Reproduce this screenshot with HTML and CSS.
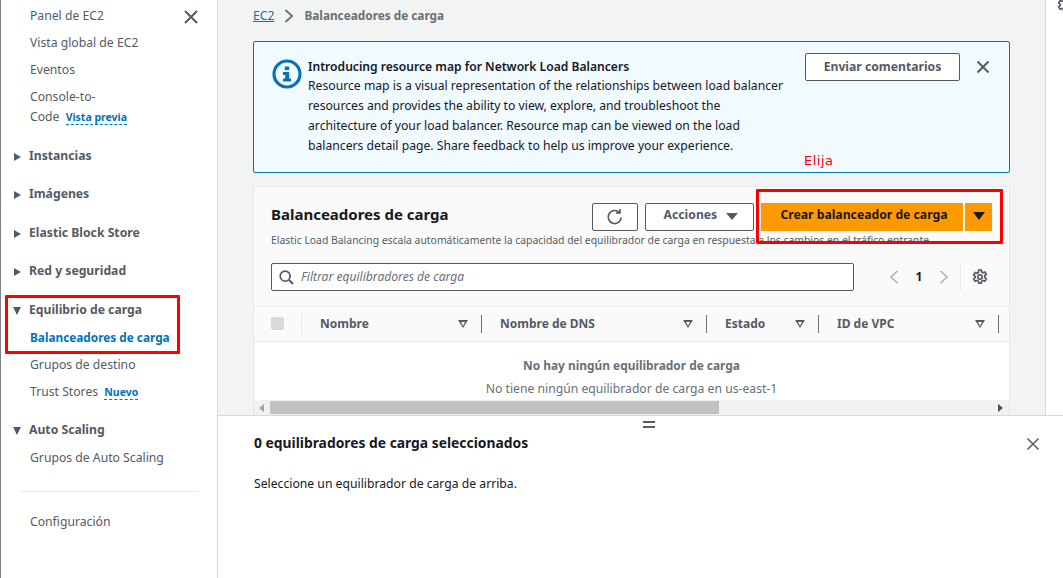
FILE: index.html
```html
<!DOCTYPE html>
<html lang="es">
<head>
    <meta charset="UTF-8">
    <meta name="viewport" content="width=device-width, initial-scale=1.0">
    <title>Balanceadores de carga - EC2</title>
    <link rel="stylesheet" href="styles.css">
</head>
<body>
    <div class="app">
        <nav class="nav">
            <button class="nav-close" aria-label="Cerrar">
                <svg width="14" height="14" viewBox="0 0 14 14"><path d="M1 1l12 12M13 1L1 13" class="stroke-2"/></svg>
            </button>
            <ul class="nav-list">
                <li class="nav-item">Panel de EC2</li>
                <li class="nav-item">Vista global de EC2</li>
                <li class="nav-item">Eventos</li>
                <li class="nav-item nav-wrap">Console-to-<br>Code <span class="tag tag-preview">Vista previa</span></li>
            </ul>
            <div class="nav-head nav-head-first"><span class="caret-right"></span>Instancias</div>
            <div class="nav-head"><span class="caret-right"></span>Imágenes</div>
            <div class="nav-head"><span class="caret-right"></span>Elastic Block Store</div>
            <div class="nav-head"><span class="caret-right"></span>Red y seguridad</div>
            <div class="nav-head"><span class="caret-down"></span>Equilibrio de carga</div>
            <ul class="nav-list">
                <li class="nav-item nav-active">Balanceadores de carga</li>
                <li class="nav-item">Grupos de destino</li>
                <li class="nav-item">Trust Stores <span class="tag tag-new">Nuevo</span></li>
            </ul>
            <div class="nav-head"><span class="caret-down"></span>Auto Scaling</div>
            <ul class="nav-list">
                <li class="nav-item">Grupos de Auto Scaling</li>
            </ul>
            <hr class="nav-divider">
            <div class="nav-item">Configuración</div>
        </nav>

        <div class="workspace">
            <div class="upper">
                <main class="content">
                    <div class="breadcrumb">
                        <a class="crumb-link" href="#">EC2</a>
                        <svg width="10" height="14" viewBox="0 0 10 14"><path d="M1.500 1L8 7l-6.500 6" class="stroke-crumb"/></svg>
                        <span class="crumb-current">Balanceadores de carga</span>
                    </div>

                    <section class="flash">
                        <svg class="flash-icon" width="30" height="30" viewBox="0 0 30 30">
                            <circle cx="15" cy="15" r="13" fill="none" stroke="#0972b3" stroke-width="3.200"/>
                            <rect x="12.800" y="7.500" width="4.400" height="3.600" fill="#0972b3"/>
                            <path d="M11 13h6.200v6.500h1.800V22.500h-8v-3h2.200V16H11z" fill="#0972b3"/>
                        </svg>
                        <div class="flash-body">
                            <strong class="flash-title">Introducing resource map for Network Load Balancers</strong>
                            <p class="flash-text">Resource map is a visual representation of the relationships between load balancer resources and provides the ability to view, explore, and troubleshoot the architecture of your load balancer. Resource map can be viewed on the load balancers detail page. Share feedback to help us improve your experience.</p>
                        </div>
                        <button class="btn btn-feedback">Enviar comentarios</button>
                        <svg class="flash-close" width="14" height="14" viewBox="0 0 14 14"><path d="M1.500 1.500l11 11M12.500 1.500l-11 11" class="stroke-2"/></svg>
                    </section>

                    <section class="panel">
                        <div class="panel-head">
                            <div class="panel-top">
                                <h1 class="panel-title">Balanceadores de carga</h1>
                                <button class="btn btn-refresh" aria-label="Actualizar">
                                    <svg width="18" height="18" viewBox="0 0 18 18"><path d="M15.200 9.500a6.500 6.500 0 1 1-2-5.200M14 1v4h-4" class="stroke-icon"/></svg>
                                </button>
                                <button class="btn btn-actions">Acciones <span class="tri"></span></button>
                                <div class="split-btn">
                                    <button class="btn-primary">Crear balanceador de carga</button>
                                    <button class="btn-primary btn-primary-tri" aria-label="Más"><span class="tri tri-dark"></span></button>
                                </div>
                            </div>
                            <p class="panel-desc">Elastic Load Balancing escala automáticamente la capacidad del equilibrador de carga en respuesta a los cambios en el tráfico entrante.</p>
                            <div class="filter-row">
                                <div class="filter">
                                    <svg width="15" height="15" viewBox="0 0 15 15"><circle cx="6.200" cy="6.200" r="5" class="stroke-icon"/><path d="M10 10l4 4" class="stroke-2"/></svg>
                                    <span class="filter-text">Filtrar equilibradores de carga</span>
                                </div>
                                <div class="pager">
                                    <svg width="10" height="14" viewBox="0 0 10 14"><path d="M8.500 1L2 7l6.500 6" class="stroke-muted"/></svg>
                                    <b class="page-num">1</b>
                                    <svg width="10" height="14" viewBox="0 0 10 14"><path d="M1.500 1L8 7l-6.500 6" class="stroke-muted"/></svg>
                                </div>
                                <div class="prefs">
                                    <svg width="16" height="16" viewBox="0 0 16 16"><path d="M6.700 1h2.600l.4 2 1.300.7 1.900-.7 1.400 2.300-1.500 1.400v1.800l1.500 1.400-1.400 2.300-1.900-.7-1.300.7-.4 2H6.700l-.4-2-1.300-.7-1.900.7-1.400-2.300 1.500-1.400V7.300L1.700 5.900l1.400-2.300 1.900.7 1.300-.7z" class="stroke-icon"/><circle cx="8" cy="8" r="2.200" class="stroke-icon"/></svg>
                                </div>
                            </div>
                        </div>
                        <div class="table-head">
                            <div class="th-check"><span class="checkbox"></span></div>
                            <div class="th th-name">Nombre <span class="sort"></span></div>
                            <div class="th th-dns">Nombre de DNS <span class="sort"></span></div>
                            <div class="th th-state">Estado <span class="sort"></span></div>
                            <div class="th th-vpc">ID de VPC <span class="sort"></span></div>
                        </div>
                        <div class="table-empty">
                            <b class="empty-title">No hay ningún equilibrador de carga</b>
                            <span class="empty-text">No tiene ningún equilibrador de carga en us-east-1</span>
                        </div>
                        <div class="scrollbar">
                            <div class="scroll-end"><span class="scroll-left"></span></div>
                            <div class="scroll-track"><div class="scroll-thumb"></div></div>
                            <span class="scroll-right"></span>
                        </div>
                    </section>
                </main>
                <aside class="rail">
                    <svg class="rail-icon" width="16" height="16" viewBox="0 0 16 16"><path d="M6.700 1h2.600l.4 2 1.300.7 1.900-.7 1.400 2.300-1.500 1.400v1.800l1.500 1.400-1.400 2.300-1.900-.7-1.300.7-.4 2H6.700l-.4-2-1.300-.7-1.900.7-1.400-2.300 1.500-1.400V7.300L1.700 5.900l1.400-2.300 1.900.7 1.300-.7z" class="stroke-icon"/></svg>
                </aside>
            </div>

            <section class="details">
                <div class="handle"></div>
                <div class="details-top">
                    <h2 class="details-title">0 equilibradores de carga seleccionados</h2>
                    <svg width="14" height="14" viewBox="0 0 14 14"><path d="M1.500 1.500l11 11M12.500 1.500l-11 11" class="stroke-15"/></svg>
                </div>
                <p class="details-text">Seleccione un equilibrador de carga de arriba.</p>
            </section>
        </div>
    </div>

    <!-- anotaciones del tutorial -->
    <div class="mark mark-nav"></div>
    <div class="mark mark-create"></div>
    <span class="mark-label">Elija</span>
</body>
</html>
```

FILE: styles.css
```css
* {
    box-sizing: border-box;
}
body {
    font-family: "Noto Sans", Arial, sans-serif;
    font-size: 12.2px;
    line-height: 20px;
    color: #16191f;
    background-color: #fff;
    margin: 0;
    height: 100vh;
    overflow: hidden;
}
ul {
    list-style: none;
    margin: 0;
    padding: 0;
}
button {
    font-family: inherit;
    cursor: pointer;
}
svg {
    flex: none;
    display: block;
}
.stroke-2 {
    fill: none;
    stroke: #545b64;
    stroke-width: 2;
}
.stroke-15 {
    fill: none;
    stroke: #545b64;
    stroke-width: 1.5;
}
.stroke-icon {
    fill: none;
    stroke: #545b64;
    stroke-width: 1.7;
}
.stroke-crumb {
    fill: none;
    stroke: #687078;
    stroke-width: 1.8;
}
.stroke-muted {
    fill: none;
    stroke: #aab7b8;
    stroke-width: 1.7;
}
.app {
    display: flex;
    height: 100%;
}

/* nav */
.nav {
    position: relative;
    flex: none;
    width: 218px;
    height: 100%;
    padding: 6px 18px 0 29px;
    border-left: 1px solid #808080;
    border-right: 1px solid #d5dbdb;
    color: #545b64;
}
.nav-close {
    position: absolute;
    top: 10px;
    left: 183px;
    padding: 0;
    border: none;
    background: none;
}
.nav-list {
    display: flex;
    flex-direction: column;
    gap: 7px;
}
.nav-item {
    white-space: nowrap;
}
.nav-active {
    color: #0073bb;
    font-size: 11.8px;
    line-height: 19px;
    padding-bottom: 1px;
    font-weight: 700;
}
.nav-head {
    display: flex;
    align-items: center;
    position: relative;
    margin: 18.5px 0 0 -1px;
    font-weight: 700;
    white-space: nowrap;
}
.nav-head + .nav-list {
    margin-top: 8px;
}
.caret-right {
    position: absolute;
    left: -15px;
    top: 7px;
    border-left: 7px solid #545b64;
    border-top: 4.5px solid transparent;
    border-bottom: 4.5px solid transparent;
}
.caret-down {
    position: absolute;
    left: -16px;
    top: 7px;
    border-top: 8px solid #545b64;
    border-left: 4.5px solid transparent;
    border-right: 4.5px solid transparent;
}
.tag {
    display: inline-block;
    margin-left: 3px;
    font-size: 10.5px;
    line-height: 14px;
    font-weight: 700;
    color: #0073bb;
    border-bottom: 1px dashed #0073bb;
}
.nav-divider {
    margin: 23px 0 20px -11px;
    width: 180px;
    border: none;
    border-top: 1px solid #eaeded;
}

/* main */
.workspace {
    flex: 1;
    min-width: 0;
    display: flex;
    flex-direction: column;
    height: 100%;
}
.upper {
    display: flex;
    flex: none;
    height: 415px;
    overflow: hidden;
    background-color: #f2f3f3;
}
.content {
    flex: none;
    width: 827px;
    padding: 0 35px;
}
.breadcrumb {
    display: flex;
    align-items: center;
    height: 32px;
    gap: 10px;
    margin-bottom: 9px;
    font-size: 12.2px;
}
.crumb-link {
    color: #0073bb;
}
.crumb-current {
    color: #687078;
    font-size: 11.8px;
    line-height: 19px;
    padding-bottom: 1px;
    font-weight: 700;
}
.flash {
    position: relative;
    display: flex;
    align-items: flex-start;
    height: 132px;
    padding: 15px 19px 0 18px;
    background-color: #f1faff;
    border: 1px solid #0073bb;
    border-radius: 2px;
}
.flash-icon {
    margin-right: 6px;
    margin-top: 2px;
}
.flash-body {
    width: 479px;
    margin-right: 4px;
}
.flash-title {
    display: block;
    font-weight: 600;
    font-size: 12.1px;
    line-height: 19px;
}
.flash-text {
    margin: 0;
    color: #16191f;
}
.btn {
    background-color: #fff;
    border: 1px solid #545b64;
    border-radius: 2px;
    color: #545b64;
    font-weight: 700;
    font-size: 12.2px;
}
.btn-feedback {
    flex: none;
    width: 155px;
    height: 28px;
    padding: 0 0 2px;
    margin: -4px 0 0 17px;
}
.flash-close {
    margin: 3px 0 0 16px;
}
.panel {
    margin-top: 14px;
    background-color: #fff;
    border-left: 1px solid #e5e8e8;
    border-right: 1px solid #e5e8e8;
    box-shadow: 0 -1px 0 #eaeded;
}
.panel-head {
    height: 120px;
    padding: 16px 0 0 17px;
    background-color: #fafafa;
    border-bottom: 1px solid #eaeded;
}
.panel-top {
    display: flex;
    align-items: center;
    height: 27px;
}
.panel-title {
    flex: 1;
    margin: 0 0 5px;
    font-size: 15px;
    font-weight: 700;
}
.btn-refresh {
    display: flex;
    align-items: center;
    justify-content: center;
    width: 46px;
    height: 28px;
    padding: 0;
}
.btn-actions {
    width: 109px;
    height: 28px;
    margin-left: 7px;
    padding: 0 0 5px 3px;
}
.tri {
    display: inline-block;
    margin-left: 6px;
    vertical-align: -1px;
    border-top: 7px solid #545b64;
    border-left: 6px solid transparent;
    border-right: 6px solid transparent;
}
.tri-dark {
    margin: 0;
    border-top: 8px solid #16191f;
}
.split-btn {
    display: flex;
    gap: 2px;
    margin: 0 17px 0 7px;
}
.btn-primary {
    height: 28px;
    width: 202px;
    padding: 0 0 5px 4px;
    border: none;
    background-color: #ff9900;
    color: #16191f;
    font-weight: 700;
    font-size: 12.2px;
}
.btn-primary-tri {
    width: 27px;
    padding: 0 0 4px;
}
.panel-desc {
    margin: 0;
    font-size: 10.4px;
    line-height: 20px;
    color: #545b64;
    white-space: nowrap;
}
.filter-row {
    display: flex;
    align-items: center;
    margin-top: 13px;
}
.filter {
    display: flex;
    align-items: center;
    gap: 7px;
    width: 583px;
    height: 28px;
    padding-left: 7px;
    background-color: #fff;
    border: 1px solid #545b64;
    border-radius: 2px;
}
.filter-text {
    font-style: italic;
    color: #687078;
    font-size: 12.1px;
}
.pager {
    display: flex;
    align-items: center;
    gap: 19.5px;
    margin-left: 35px;
}
.page-num {
    font-size: 12px;
    margin: 0 -3px;
}
.prefs {
    height: 28px;
    margin-left: 11px;
    padding: 6px 0 0 11px;
    border-left: 1px solid #eaeded;
}
.table-head {
    display: flex;
    height: 35px;
    align-items: center;
    background-color: #fafafa;
    border-bottom: 1px solid #eaeded;
    font-size: 12px;
    font-weight: 700;
    color: #545b64;
}
.th-check {
    flex: none;
    width: 48px;
    height: 20px;
    padding: 3px 0 0 17px;
    border-right: 1px solid #eaeded;
}
.checkbox {
    display: block;
    width: 13px;
    height: 13px;
    background-color: #d5dbdb;
    border-radius: 2px;
}
.th {
    flex: none;
    display: flex;
    align-items: center;
    justify-content: space-between;
    height: 18px;
    padding: 0 13px 0 18px;
    border-right: 1px solid #687078;
}
.th-name {
    width: 180px;
}
.th-dns {
    width: 225px;
}
.th-state {
    width: 112px;
}
.th-vpc {
    width: 180px;
}
.sort {
    width: 0;
    height: 0;
    border-top: 8px solid #545b64;
    border-left: 5px solid transparent;
    border-right: 5px solid transparent;
    position: relative;
}
.sort::after {
    content: "";
    position: absolute;
    left: -2.500px;
    top: -6.500px;
    border-top: 4px solid #fafafa;
    border-left: 2.500px solid transparent;
    border-right: 2.500px solid transparent;
}
.table-empty {
    display: flex;
    flex-direction: column;
    align-items: center;
    height: 58px;
    padding-top: 14px;
    gap: 4px;
    background-color: #fff;
    color: #687078;
}
.empty-title {
    font-size: 11.9px;
    line-height: 19px;
}
.scrollbar {
    display: flex;
    align-items: center;
    height: 15px;
    background-color: #f1f1f1;
}
.scroll-end {
    flex: none;
    width: 16px;
    padding-left: 5px;
}
.scroll-left {
    display: block;
    width: 0;
    height: 0;
    border-right: 5px solid #a3a3a3;
    border-top: 4px solid transparent;
    border-bottom: 4px solid transparent;
}
.scroll-track {
    flex: 1;
    height: 13px;
}
.scroll-thumb {
    width: 449px;
    height: 100%;
    background-color: #c1c1c1;
}
.scroll-right {
    flex: none;
    width: 0;
    height: 0;
    margin-right: 6px;
    border-left: 5px solid #505050;
    border-top: 4px solid transparent;
    border-bottom: 4px solid transparent;
}
.rail {
    flex: 1;
    padding: 0 0 0 11px;
    background-color: #fff;
    border-left: 1px solid #d5dbdb;
    overflow: hidden;
}
.rail-icon {
    margin-top: -3px;
}

/* panel de abajo */
.details {
    position: relative;
    flex: 1;
    padding: 18px 23px 0 36px;
    background-color: #fff;
    border-top: 1px solid #d5dbdb;
}
.handle {
    position: absolute;
    top: 5px;
    left: 425px;
    width: 12px;
    height: 7px;
    border-top: 2px solid #545b64;
    border-bottom: 2px solid #545b64;
}
.details-top {
    display: flex;
    align-items: center;
    justify-content: space-between;
    height: 20px;
}
.details-title {
    margin: 0 0 2px;
    font-size: 13.85px;
    line-height: 16px;
    font-weight: 700;
}
.details-text {
    margin: 20px 0 0;
    color: #16191f;
}

/* anotaciones */
.mark {
    position: absolute;
    border: 3px solid #f00;
    border-radius: 1px;
}
.mark-nav {
    left: 5px;
    top: 295px;
    width: 175px;
    height: 59px;
}
.mark-create {
    left: 756px;
    top: 189px;
    width: 247px;
    height: 55px;
}
.mark-label {
    position: absolute;
    left: 804px;
    top: 151px;
    color: #f00;
    font-family: "DejaVu Sans", sans-serif;
    font-size: 13px;
    letter-spacing: 0.5px;
    line-height: 20px;
}
```
